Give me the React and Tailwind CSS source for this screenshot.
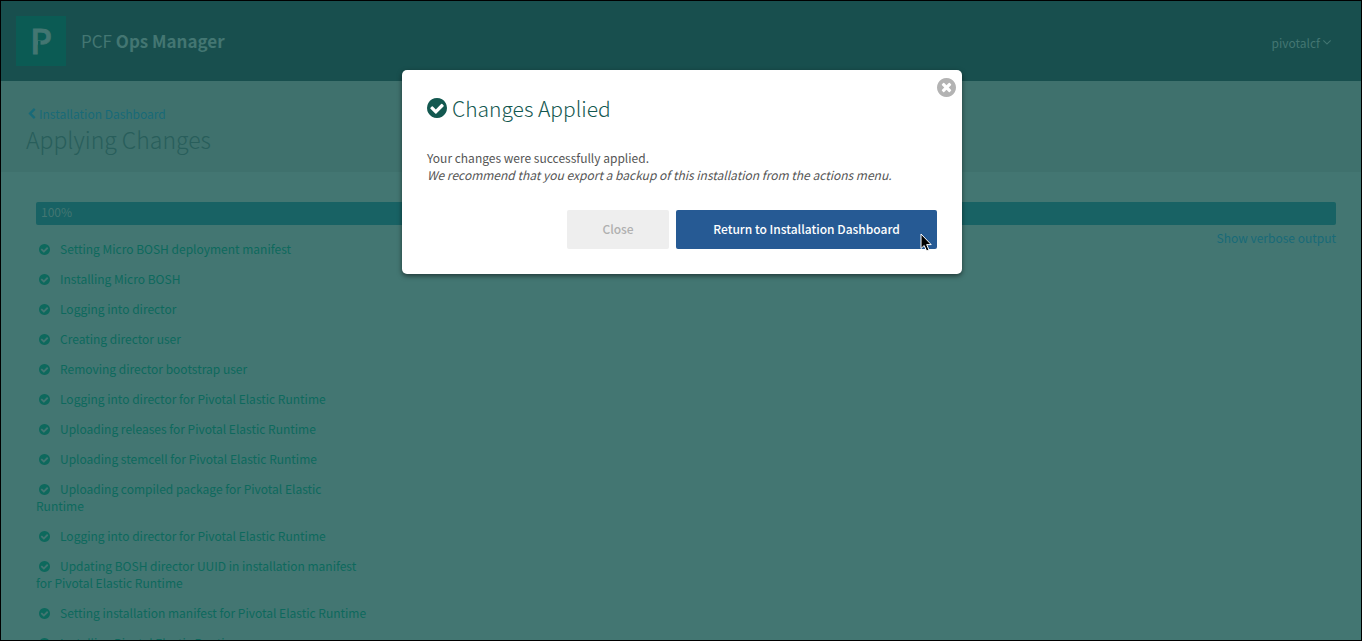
const CHECK =
  'M1412 734q0-28-18-46l-91-90q-19-19-45-19t-45 19l-408 407-226-226q-19-19-45-19t-45 19l-91 90q-18 18-18 46 0 27 18 45l362 362q19 19 45 19 27 0 46-19l543-543q18-18 18-45zm252 162q0 209-103 385.5t-279.5 279.5-385.5 103-385.5-103-279.5-279.5-103-385.5 103-385.5 279.5-279.5 385.5-103 385.5 103 279.5 279.5 103 385.5z';
const TIMES =
  'M1277 1122q0-26-19-45l-181-181 181-181q19-19 19-45 0-27-19-46l-90-90q-19-19-46-19-26 0-45 19l-181 181-181-181q-19-19-45-19-27 0-46 19l-90 90q-19 19-19 46 0 26 19 45l181 181-181 181q-19 19-19 45 0 27 19 46l90 90q19 19 46 19 26 0 45-19l181-181 181 181q19 19 45 19 27 0 46-19l90-90q19-19 19-46zm387-226q0 209-103 385.5t-279.5 279.5-385.5 103-385.5-103-279.5-279.5-103-385.5 103-385.5 279.5-279.5 385.5-103 385.5 103 279.5 279.5 103 385.5z';
const CHEVRON_LEFT =
  'M1427 301l-531 531 531 531q19 19 19 45t-19 45l-166 166q-19 19-45 19t-45-19l-742-742q-19-19-19-45t19-45l742-742q19-19 45-19t45 19l166 166q19 19 19 45t-19 45z';
const ANGLE_DOWN =
  'M1395 736q0 13-10 23l-466 466q-10 10-23 10t-23-10l-466-466q-10-10-10-23t10-23l50-50q10-10 23-10t23 10l393 393 393-393q10-10 23-10t23 10l50 50q10 10 10 23z';

function Icon({ d, box = '128 128 1536 1536', className }) {
  return (
    <svg viewBox={box} fill="currentColor" aria-hidden="true" className={className}>
      <path d={d} />
    </svg>
  );
}

const STEPS = [
  'Setting Micro BOSH deployment manifest',
  'Installing Micro BOSH',
  'Logging into director',
  'Creating director user',
  'Removing director bootstrap user',
  'Logging into director for Pivotal Elastic Runtime',
  'Uploading releases for Pivotal Elastic Runtime',
  'Uploading stemcell for Pivotal Elastic Runtime',
  'Uploading compiled package for Pivotal Elastic Runtime',
  'Logging into director for Pivotal Elastic Runtime',
  'Updating BOSH director UUID in installation manifest for Pivotal Elastic Runtime',
  'Setting installation manifest for Pivotal Elastic Runtime',
  'Installing Pivotal Elastic Runtime',
];

function Header() {
  return (
    <header className="flex h-20 items-center bg-[#184f4e] pr-[30px] pl-[15px] text-[#437672]">
      <svg viewBox="0 0 50 50" className="size-[50px]" role="img" aria-label="Pivotal">
        <rect width="50" height="50" fill="#0b5b54" />
        <text x="14" y="38" fontSize="34" fontWeight="500" fill="currentColor" stroke="currentColor" strokeWidth="0.8">
          P
        </text>
        <rect x="22" y="25" width="2.5" height="7" fill="#0b5b54" />
      </svg>
      <h1 className="ml-[15px] flex-1 text-[17px] leading-6">
        PCF <b className="font-bold">Ops Manager</b>
      </h1>
      <button type="button" className="mt-0.5 flex items-center gap-[3px] text-[12px] leading-[17px]">
        pivotalcf
        <Icon d={ANGLE_DOWN} box="384 640 1024 640" className="h-[5px] w-2" />
      </button>
    </header>
  );
}

function Modal() {
  return (
    <div className="absolute inset-x-0 top-[69px] flex justify-center pl-0.5">
      <section
        role="dialog"
        aria-labelledby="dialog-title"
        className="relative w-[560px] rounded-[5px] bg-white px-[25px] pt-6 pb-[25px] text-[#555] shadow-[0_2px_5px_rgba(0,0,0,0.5)]"
      >
        <button type="button" aria-label="Dismiss" className="absolute top-2 right-1.5 text-[#b3b3b3]">
          <Icon d={TIMES} className="size-[19px]" />
        </button>
        <h2 id="dialog-title" className="flex items-center gap-[5px] text-[21px] leading-7 font-light text-[#135850]">
          <Icon d={CHECK} className="size-5" />
          Changes Applied
        </h2>
        <p className="mt-[27px] text-[12px] leading-[17px]">
          Your changes were successfully applied.
          <br />
          <em>We recommend that you export a backup of this installation from the actions menu.</em>
        </p>
        <div className="mt-[27px] flex justify-end gap-[7px] text-[12px] leading-[37px] font-medium">
          <button type="button" className="w-[102px] rounded-[2px] bg-[#eee] pb-0.5 text-[#b0b0b0]">
            Close
          </button>
          <button type="button" className="w-[261px] rounded-[2px] bg-[#265a94] pb-0.5 text-white">
            Return to Installation Dashboard
          </button>
        </div>
        <svg viewBox="0 0 12 19" className="absolute right-[30px] bottom-[22px] h-[19px] w-3" aria-hidden="true">
          <path d="M1 1V15.5L4.2 12.5L6.6 18L9 17L6.7 11.6H11.2Z" fill="#000" stroke="#fff" strokeWidth="1" />
        </svg>
      </section>
    </div>
  );
}

export default function App() {
  return (
    <div className="relative h-screen overflow-hidden border border-black bg-[#437672] font-['Noto_Sans_CJK_SC','Source_Sans_Pro',sans-serif]">
      <Header />
      <div className="h-[91px] bg-[#3f716d] px-[25px] pt-6">
        <a href="#dashboard" className="flex items-center gap-[3px] pl-0.5 text-[12px] leading-[17px] text-[#186a78]">
          <Icon d={CHEVRON_LEFT} box="384 0 1100 1664" className="h-[11px] w-2" />
          Installation Dashboard
        </a>
        <h2 className="text-[23px] leading-[34px] font-light text-[#285e5b]">Applying Changes</h2>
      </div>
      <main className="px-[25px] pt-[30px] text-[12px] leading-[17px]">
        <div className="ml-2.5 h-[23px] rounded-[2px] bg-[#186264] px-[5px] pt-px text-[#437672]">100%</div>
        <div className="flex items-start justify-between pl-2.5">
          <ul className="w-[335px] pt-[15px] text-[#0d695d]">
            {STEPS.map((step, i) => (
              <li key={i} className="mb-[13px]">
                <Icon d={CHECK} className="mr-2.5 ml-[3px] inline size-[11px] align-[-1px]" />
                {step}
              </li>
            ))}
          </ul>
          <a href="#verbose" className="mt-1 text-[#186a78]">
            Show verbose output
          </a>
        </div>
      </main>
      <Modal />
    </div>
  );
}
